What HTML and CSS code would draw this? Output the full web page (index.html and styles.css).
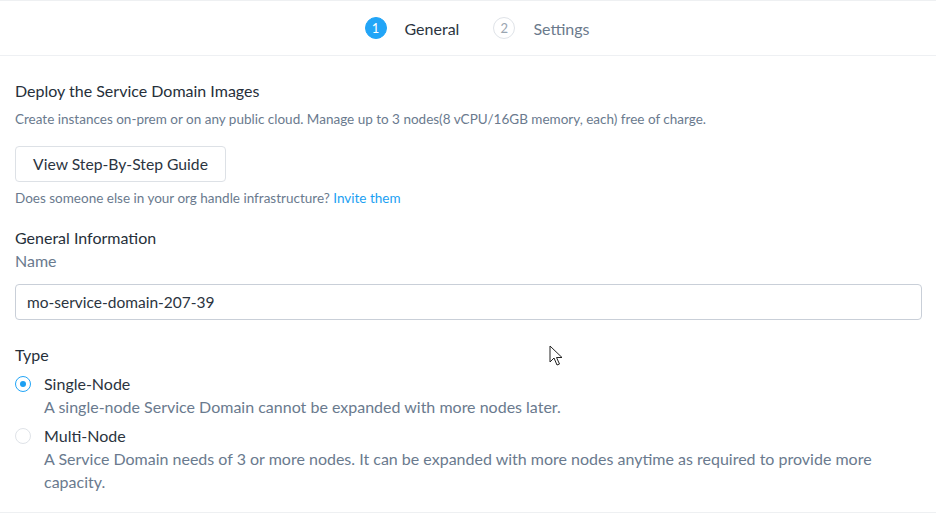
FILE: index.html
```html
<!DOCTYPE html>
<html>
<head>
<meta charset="utf-8">
<link rel="stylesheet" href="styles.css">
</head>
<body>
<div class="page">
  <header class="steps">
    <div class="step active"><span class="num">1</span><span class="label">General</span></div>
    <div class="step"><span class="num">2</span><span class="label">Settings</span></div>
  </header>
  <main class="content">
    <h2 class="title">Deploy the Service Domain Images</h2>
    <p class="desc">Create instances on-prem or on any public cloud. Manage up to 3 nodes(8 vCPU/16GB memory, each) free of charge.</p>
    <button class="guide">View Step-By-Step Guide</button>
    <p class="desc invite">Does someone else in your org handle infrastructure? <a href="#">Invite them</a></p>
    <h3 class="section">General Information</h3>
    <label class="field-label">Name</label>
    <div class="input">mo-service-domain-207-39</div>
    <h3 class="section type">Type</h3>
    <div class="radio-row">
      <span class="radio checked"></span>
      <div class="radio-text">
        <div class="radio-title">Single-Node</div>
        <div class="radio-desc">A single-node Service Domain cannot be expanded with more nodes later.</div>
      </div>
    </div>
    <div class="radio-row">
      <span class="radio"></span>
      <div class="radio-text">
        <div class="radio-title">Multi-Node</div>
        <div class="radio-desc">A Service Domain needs of 3 or more nodes. It can be expanded with more nodes anytime as required to provide more capacity.</div>
      </div>
    </div>
  </main>
  <div class="footer-line"></div>
  <svg class="cursor" width="14" height="22" viewBox="0 0 14 22"><path d="M1 1 L1 17 L5 13 L8 20 L10.5 19 L7.5 12.5 L13 12.5 Z" fill="#fff" stroke="#222" stroke-width="1" stroke-linejoin="round"/></svg>
</div>
</body>
</html>
```
FILE: styles.css
```css
* { box-sizing: border-box; }
html, body { margin: 0; padding: 0; background: #fff; }
body { font-family: Lato, "Open Sans", sans-serif; color: #262f3a; }
.page { position: relative; width: 936px; height: 517px; overflow: hidden; border-top: 1px solid #eef0f2; }
.steps { height: 55px; display: flex; justify-content: center; align-items: center; gap: 34px; border-bottom: 1px solid #eef0f3; padding-left: 18px; }
.step { display: flex; align-items: center; gap: 18px; font-size: 16px; color: #6b7a8c; }
.step.active { color: #2b3440; }
.num { width: 22px; height: 22px; border-radius: 50%; border: 1px solid #dfe3e8; display: flex; align-items: center; justify-content: center; font-size: 13px; color: #9aa5b1; }
.step.active .num { background: #22a5f7; border-color: #22a5f7; color: #fff; }
.content { padding: 25px 15px 0 15px; }
.title { margin: 0; font-size: 16px; font-weight: 400; line-height: 20px; color: #262f3a; }
.desc { margin: 10px 0 0; font-size: 13.5px; line-height: 16px; color: #6a7a8e; }
.guide { margin-top: 19px; width: 211px; height: 36px; border: 1px solid #dde1e6; border-radius: 4px; background: #fff; font-family: inherit; font-size: 15.7px; color: #2b3440; padding: 0; }
.invite { margin-top: 8px; }
.invite a { color: #1b9ff2; text-decoration: none; }
.section { margin: 22px 0 0; font-size: 16px; font-weight: 400; line-height: 20px; color: #262f3a; }
.field-label { display: block; margin-top: 3px; font-size: 16px; line-height: 20px; color: #6a7a8e; }
.input { margin-top: 13px; height: 36px; width: 907px; border: 1px solid #c9cfd8; border-radius: 4px; padding: 0 11px; display: flex; align-items: center; font-size: 15.5px; color: #2b3440; }
.type { margin-top: 25px; }
.radio-row { display: flex; align-items: flex-start; gap: 13px; margin-top: 9px; }
.radio-row + .radio-row { margin-top: 8px; }
.radio { flex: none; width: 16px; height: 16px; border-radius: 50%; border: 1px solid #dfe3e8; margin-top: 2px; background: #fff; position: relative; }
.radio.checked { border-color: #22a5f7; }
.radio.checked::after { content: ""; position: absolute; left: 4px; top: 4px; width: 6px; height: 6px; border-radius: 50%; background: #1b9ff2; }
.radio-title { font-size: 16px; line-height: 20px; color: #2b3440; }
.radio-desc { margin-top: 1px; font-size: 16px; line-height: 23px; color: #6a7a8e; width: 860px; }
.footer-line { position: absolute; left: 0; right: 0; top: 511px; border-top: 1px solid #eef0f2; }
.cursor { position: absolute; left: 549px; top: 344px; }
```
